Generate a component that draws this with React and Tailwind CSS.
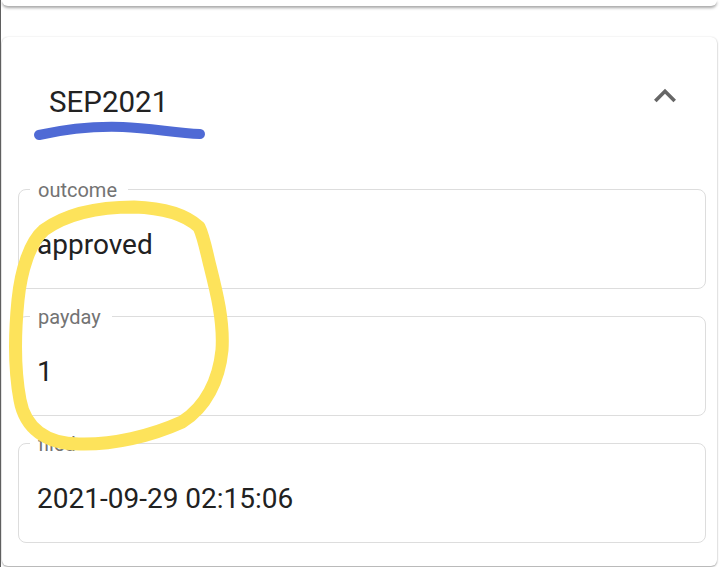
function ChevronUp() {
  return (
    <svg width="44" height="44" viewBox="0 0 24 24" className="shrink-0 -mt-[11.5px] mr-[30px]">
      <path d="M12 8l-6 6 1.41 1.41L12 10.83l4.59 4.58L18 14z" fill="#666666" />
    </svg>
  );
}

function Field({ label, value }) {
  return (
    <div className="relative h-[100px] rounded-[8px] border border-[#dddddd] pt-[41px] pl-[18px]">
      <span className="absolute left-[11px] top-[-10px] bg-white pl-[8px] pr-[11px] text-[20px] leading-[20px] text-[#737373]">
        {label}
      </span>
      <div className="text-[28px] leading-[28px] text-[#212121]">{value}</div>
    </div>
  );
}

export default function App() {
  const fields = [
    { label: "outcome", value: "approved" },
    { label: "payday", value: "1" },
    { label: "filed", value: "2021-09-29 02:15:06" },
  ];

  return (
    <div
      className="relative w-[720px] h-[567px] overflow-hidden bg-white border-l border-[#5f5f5f]"
      style={{ fontFamily: "Roboto, 'Liberation Sans', sans-serif" }}
    >
      {/* bottom of the previous card */}
      <div className="ml-[1px] mr-[3px] h-[6px] rounded-b-[8px] bg-white shadow-[0_2px_3px_rgba(0,0,0,0.35)]" />

      <div className="ml-[1px] mr-[3px] mt-[31px] h-[529px] rounded-[6px] bg-white pt-[48px] shadow-[0_1px_2px_rgba(0,0,0,0.35),0_0_2px_rgba(0,0,0,0.08)]">
        <div className="flex h-[34px] items-start justify-between">
          <span className="pl-[47px] text-[29.5px] leading-[34px] text-[#222222]">SEP2021</span>
          <ChevronUp />
        </div>

        <div className="mt-[70px] ml-[16px] flex w-[688px] flex-col gap-[27px]">
          {fields.map((f) => (
            <Field key={f.label} label={f.label} value={f.value} />
          ))}
        </div>
      </div>

      {/* hand-drawn annotations */}
      <svg className="pointer-events-none absolute inset-0" width="720" height="567" viewBox="0 0 720 567">
        <path
          d="M38 135 C 65 129, 95 126, 122 127 S 175 133, 199 134"
          fill="none"
          stroke="#4f6ad5"
          strokeWidth="10"
          strokeLinecap="round"
        />
        <path
          d="M198 227 C 185 215, 165 208, 133 207 C 100 207, 68 212, 43 230 C 29 242, 20 270, 17 300 C 14 330, 13 368, 19 400 C 24 428, 45 444, 78 444 C 112 445, 150 436, 181 422 C 205 407, 218 380, 221 350 C 223 320, 215 290, 208 262 C 204 245, 202 235, 198 227"
          fill="none"
          stroke="#fde35b"
          strokeWidth="13"
          strokeLinecap="round"
          strokeLinejoin="round"
        />
      </svg>
    </div>
  );
}
